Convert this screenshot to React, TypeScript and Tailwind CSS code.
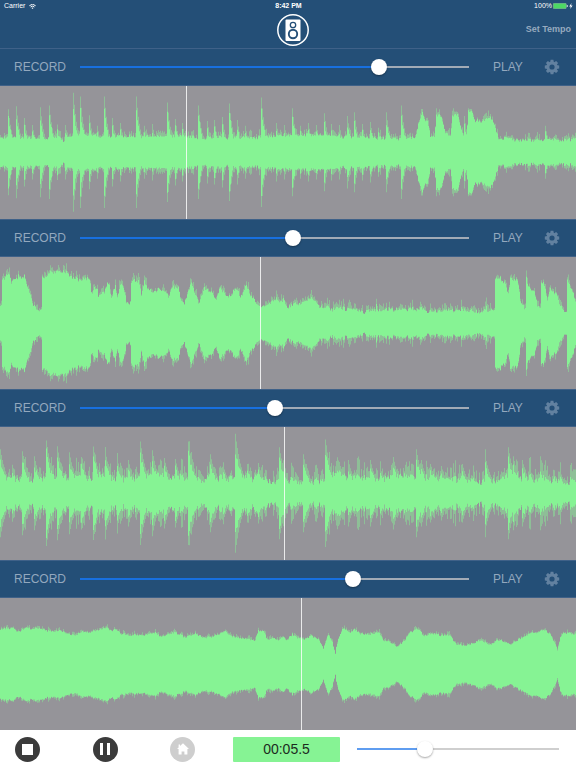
import { useState } from "react";

type Point = [x: number, amp: number];

interface Track {
  name: string;
  volume: number;
  playhead: number;
  body: Point[];
  hits: Point[];
  decay: number;
  grain: number;
  haze: number;
}

const WIDTH = 576;
const HEIGHT = 133;
const MID = HEIGHT / 2;

const TRACKS: Track[] = [
  {
    name: "Track 1",
    volume: 78,
    playhead: 186,
    body: [
      [0, 15], [60, 15], [63, 11], [66, 17], [100, 17], [186, 16], [192, 15], [250, 15], [288, 18], [330, 18],
      [345, 16], [400, 14], [415, 15], [418, 29], [422, 40], [427, 30], [430, 18], [434, 16], [436, 37], [441, 36],
      [445, 20], [450, 16], [452, 36], [457, 39], [461, 24], [464, 15], [466, 15], [468, 42], [471, 42], [474, 33],
      [480, 31], [485, 32], [490, 36], [494, 28], [498, 14], [515, 13], [540, 13], [576, 13],
    ],
    hits: [
      [8, 44], [16, 47], [24, 35], [32, 28], [40, 46], [49, 48], [57, 28], [65, 28], [73, 61], [80, 57], [89, 38],
      [97, 27], [104, 57], [112, 35], [120, 30], [136, 57], [144, 27], [152, 29], [160, 22], [167, 51], [175, 34],
      [182, 30], [198, 48], [207, 32], [214, 33], [222, 36], [229, 50], [237, 33], [245, 27], [261, 56], [276, 30],
      [284, 28], [292, 45], [300, 27], [308, 30], [316, 28], [324, 40], [331, 29], [339, 28], [347, 37], [354, 41],
      [362, 29], [370, 31], [378, 25], [386, 41], [401, 48], [422, 44], [436, 45], [453, 45], [464, 37], [469, 44],
      [545, 27],
    ],
    decay: 2.8,
    grain: 5,
    haze: 8,
  },
  {
    name: "Track 2",
    volume: 55,
    playhead: 260,
    body: [
      [0, 17], [1, 20], [2, 44], [5, 47], [9, 50], [11, 43], [18, 48], [22, 47], [24, 49], [26, 40], [30, 28],
      [33, 19], [37, 15], [41, 13], [42, 46], [47, 46], [50, 51], [58, 53], [66, 51], [72, 46], [80, 44], [85, 46],
      [90, 43], [91, 32], [93, 34], [97, 37], [98, 26], [101, 30], [104, 32], [107, 41], [109, 38], [111, 24],
      [115, 38], [117, 27], [119, 37], [121, 42], [124, 32], [126, 22], [130, 22], [131, 41], [136, 45], [139, 40],
      [141, 26], [144, 42], [147, 35], [155, 32], [160, 36], [165, 31], [168, 28], [171, 36], [178, 36], [180, 26],
      [184, 21], [188, 33], [191, 41], [195, 28], [198, 21], [202, 27], [204, 35], [212, 32], [216, 23], [219, 35],
      [226, 29], [231, 28], [233, 35], [236, 35], [240, 26], [243, 33], [246, 39], [249, 29], [253, 28], [257, 19],
      [261, 17], [272, 21], [276, 25], [280, 21], [283, 26], [287, 15], [289, 18], [295, 20], [302, 21], [308, 25],
      [314, 24], [318, 18], [330, 15], [350, 15], [360, 12], [390, 14], [415, 15], [430, 13], [460, 13], [480, 12],
      [492, 13], [494, 13], [495, 44], [499, 47], [504, 42], [508, 32], [510, 46], [513, 44], [517, 46], [520, 24],
      [524, 15], [525, 14], [526, 46], [528, 36], [534, 34], [537, 18], [540, 15], [541, 41], [544, 38], [547, 26],
      [550, 34], [556, 30], [559, 20], [565, 13], [566, 13], [567, 42], [572, 34], [576, 16],
    ],
    hits: [
      [9, 57], [119, 44], [136, 49], [144, 49], [172, 42], [190, 46], [246, 43], [376, 25], [389, 22], [412, 24],
      [461, 24], [486, 24], [511, 50], [526, 54], [541, 44], [550, 39], [567, 47],
    ],
    decay: 1.5,
    grain: 6,
    haze: 9,
  },
  {
    name: "Track 3",
    volume: 50,
    playhead: 284,
    body: [
      [0, 20], [14, 17], [30, 14], [60, 17], [90, 15], [105, 19], [120, 14], [150, 20], [165, 18], [200, 14],
      [240, 19], [260, 16], [277, 12], [300, 14], [320, 13], [335, 19], [350, 18], [380, 14], [395, 20], [420, 16],
      [440, 15], [470, 14], [490, 13], [512, 19], [530, 15], [576, 12],
    ],
    hits: [
      [0, 45], [12, 26], [22, 43], [34, 38], [46, 54], [57, 48], [69, 42], [81, 37], [93, 48], [105, 43], [117, 35],
      [128, 34], [140, 53], [152, 44], [164, 36], [175, 35], [188, 53], [198, 24], [210, 40], [223, 28], [235, 61],
      [247, 30], [258, 31], [279, 47], [303, 40], [325, 55], [339, 32], [348, 34], [370, 34], [380, 26], [393, 37],
      [416, 45], [421, 34], [430, 30], [441, 28], [462, 30], [485, 38], [508, 47], [513, 38], [522, 34], [530, 24],
      [540, 26], [560, 22],
    ],
    decay: 4.5,
    grain: 11,
    haze: 20,
  },
  {
    name: "Track 4",
    volume: 71,
    playhead: 301,
    body: [
      [0, 34], [3, 36], [13, 37], [18, 33], [26, 36], [40, 36], [50, 33], [58, 34], [70, 31], [75, 29], [82, 33],
      [88, 32], [95, 34], [106, 37], [111, 34], [115, 36], [120, 31], [130, 29], [145, 30], [155, 32], [160, 28],
      [175, 32], [185, 27], [195, 31], [205, 27], [215, 29], [225, 33], [230, 28], [245, 26], [255, 24], [258, 34],
      [263, 34], [267, 24], [273, 27], [279, 24], [283, 28], [287, 25], [292, 31], [297, 26], [305, 26], [310, 29],
      [318, 26], [323, 17], [328, 30], [332, 22], [335, 12], [338, 26], [342, 35], [344, 36], [350, 32], [354, 35],
      [360, 31], [370, 30], [378, 32], [383, 24], [390, 23], [396, 18], [404, 24], [410, 32], [418, 36], [424, 28],
      [431, 32], [440, 29], [450, 29], [456, 20], [465, 19], [480, 24], [490, 20], [498, 25], [510, 21], [520, 26],
      [530, 31], [545, 35], [550, 30], [555, 20], [557, 13], [560, 28], [564, 32], [571, 31], [576, 30],
    ],
    hits: [[225, 35], [418, 38], [449, 34], [504, 24]],
    decay: 1.5,
    grain: 3,
    haze: 4,
  },
];

// seeded so that a track keeps its shape between renders
function noise(n: number) {
  const s = Math.sin(n * 127.1 + 11.7) * 43758.5453;
  return s - Math.floor(s);
}

function bodyAt(points: Point[], x: number) {
  const next = points.findIndex(([px]) => px >= x);
  if (next <= 0) return points[0][1];
  const [x0, a0] = points[next - 1];
  const [x1, a1] = points[next];
  return a0 + ((a1 - a0) * (x - x0)) / (x1 - x0);
}

function hitAt(hits: Point[], x: number, decay: number) {
  return hits.reduce((max, [hx, amp]) => (x < hx ? max : Math.max(max, amp * Math.exp((hx - x) / decay / 1.6))), 0);
}

function wavePaths(track: Track, seed: number) {
  let core = "";
  let edge = "";
  for (let x = 0; x < WIDTH; x++) {
    const fine = noise(x + seed * 1000);
    const coarse = noise(Math.floor(x / 3) + seed * 700 + 31);
    const n = fine * 0.6 + coarse * 0.4;
    const body = bodyAt(track.body, x) + (n - 0.6) * track.grain;
    const hit = hitAt(track.hits, x, track.decay);
    const solid = Math.max(body, hit * (0.62 + n * 0.24));
    const outer = Math.max(hit * 0.98, solid + (noise(x * 3 + seed) * 0.6 + coarse * 0.4) ** 2 * track.haze);
    core += `M${x} ${(MID - solid).toFixed(1)}h1V${(MID + solid).toFixed(1)}h-1z`;
    edge += `M${x} ${(MID - outer).toFixed(1)}h1V${(MID + outer).toFixed(1)}h-1z`;
  }
  return { core, edge };
}

const WAVES = TRACKS.map(wavePaths);

const RANGE =
  "block h-4 min-w-0 appearance-none bg-[length:100%_2px] bg-center bg-no-repeat [&::-webkit-slider-thumb]:size-4 [&::-webkit-slider-thumb]:appearance-none [&::-webkit-slider-thumb]:rounded-full [&::-webkit-slider-thumb]:bg-white [&::-webkit-slider-thumb]:shadow-[0_1px_2px_rgba(0,0,0,0.35)]";

interface SliderProps {
  label: string;
  initial: number;
  fill: string;
  rest: string;
  className: string;
}

function Slider({ label, initial, fill, rest, className }: SliderProps) {
  const [value, setValue] = useState(initial);
  return (
    <input
      type="range"
      aria-label={label}
      value={value}
      onChange={(e) => setValue(Number(e.target.value))}
      className={`${RANGE} ${className}`}
      style={{ backgroundImage: `linear-gradient(to right, ${fill} ${value}%, ${rest} ${value}%)` }}
    />
  );
}

function GearIcon() {
  return (
    <svg viewBox="0 0 16 16" className="size-4" fill="currentColor" aria-hidden="true">
      {[0, 45, 90, 135].map((a) => (
        <path key={a} d="M6.6 .8h2.8l.5 3H6.1zM6.6 15.2h2.8l.5-3H6.1z" transform={`rotate(${a} 8 8)`} />
      ))}
      <circle cx="8" cy="8" r="4.1" fill="none" stroke="currentColor" strokeWidth="3" />
    </svg>
  );
}

function SpeakerLogo() {
  return (
    <svg viewBox="0 0 32 32" className="size-8" aria-hidden="true">
      <circle cx="16" cy="16" r="15.2" fill="none" stroke="#fff" strokeWidth="1.5" />
      <rect x="8.5" y="5.5" width="15" height="21.5" rx="1" fill="#fff" />
      <circle cx="16" cy="11" r="2.7" fill="none" stroke="#244f77" strokeWidth="1.3" />
      <circle cx="16" cy="20" r="4.2" fill="none" stroke="#244f77" strokeWidth="1.9" />
    </svg>
  );
}

function StatusBar() {
  return (
    <div className="grid h-3 grid-cols-3 items-center pr-[3px] pl-1 text-[7px] text-white">
      <span className="flex items-center gap-1">
        Carrier
        <svg viewBox="0 0 14 10" className="h-[5px] w-[7px]" fill="none" stroke="currentColor" strokeWidth="2" aria-hidden="true">
          <path d="M.8 3.4a9 9 0 0 1 12.4 0M3.2 6a5.6 5.6 0 0 1 7.6 0" />
          <path d="M5 7.8a3 3 0 0 1 4 0L7 10z" fill="currentColor" stroke="none" />
        </svg>
      </span>
      <span className="text-center font-bold">8:42 PM</span>
      <span className="flex items-center justify-end">
        100%
        <svg viewBox="0 0 20 6" className="ml-px h-[6px] w-5" aria-hidden="true">
          <rect x=".25" y=".25" width="13" height="5.5" rx="1" fill="#4cd964" stroke="#9bb0a8" strokeWidth=".5" />
          <path d="M13.8 2h.8v2h-.8z" fill="#fff" />
          <path d="M18.6 0l-2.4 3.4h1.6L17.2 6l2.4-3.4H18z" fill="#fff" />
        </svg>
      </span>
    </div>
  );
}

function TrackRow({ track, index }: { track: Track; index: number }) {
  const wave = WAVES[index];
  return (
    <section className="flex flex-1 flex-col" aria-label={track.name}>
      <div className="flex h-[38px] items-center border-y border-[#3f6188] pr-4 pl-[14px] text-[12px] text-[#93a8be]">
        <button type="button" className="w-[66px] text-left">RECORD</button>
        <Slider label={`${track.name} volume`} initial={track.volume} fill="#1870e0" rest="#a2abb6" className="flex-1" />
        <button type="button" className="w-[75px] pl-6 text-left">PLAY</button>
        <button type="button" aria-label={`${track.name} settings`} className="text-[#6281a0]">
          <GearIcon />
        </button>
      </div>
      <div className="relative min-h-[100px] flex-1 bg-[#959499]">
        <svg
          viewBox={`0 0 ${WIDTH} ${HEIGHT}`}
          preserveAspectRatio="none"
          className="absolute inset-0 size-full text-[#86f394]"
          fill="currentColor"
          aria-hidden="true"
        >
          <path d={wave.edge} opacity="0.45" />
          <path d={wave.core} />
        </svg>
        <div className="absolute inset-y-0 w-px bg-white/80" style={{ left: `${(track.playhead / WIDTH) * 100}%` }} />
      </div>
    </section>
  );
}

function Transport() {
  return (
    <footer className="flex h-[38px] items-center bg-white pr-[17px] pl-[15px]">
      <div className="flex flex-1 items-center justify-between pr-[38px]">
        <button type="button" aria-label="Stop" className="flex size-[25px] items-center justify-center rounded-full bg-[#3b3b3b]">
          <span className="size-[11px] bg-white" />
        </button>
        <button type="button" aria-label="Pause" className="flex size-[25px] items-center justify-center gap-1 rounded-full bg-[#3b3b3b]">
          <span className="h-3 w-[3px] bg-white" />
          <span className="h-3 w-[3px] bg-white" />
        </button>
        <button type="button" aria-label="Home" className="flex size-[25px] items-center justify-center rounded-full bg-[#cecece]">
          <svg viewBox="0 0 14 14" className="size-[14px]" fill="#fff" aria-hidden="true">
            <path d="M7 1.2l6 5.8h-1.6v5.4H8.4V9.6H5.6v2.8H2.6V7H1l1.6-1.6V2.4H4v1.7z" />
          </svg>
        </button>
      </div>
      <output className="flex h-[25px] w-[107px] items-center justify-center rounded-[1px] bg-[#86f394] text-[14px] text-[#1c2b1e]">
        00:05.5
      </output>
      <Slider label="Master volume" initial={32} fill="#5f9df0" rest="#cfcfcf" className="ml-[17px] w-[202px]" />
    </footer>
  );
}

export default function App() {
  return (
    <main className="flex min-h-screen flex-col bg-[#244f77] font-['Liberation_Sans',Arial,sans-serif]">
      <header>
        <StatusBar />
        <div className="grid h-9 grid-cols-3 items-center pr-[5px] pl-[15px]">
          <h1 className="col-start-2 flex justify-center pb-px" aria-label="Looper">
            <SpeakerLogo />
          </h1>
          <button type="button" className="justify-self-end text-[9px] font-bold text-[#97aabf]">
            Set Tempo
          </button>
        </div>
      </header>
      {TRACKS.map((track, i) => (
        <TrackRow key={track.name} track={track} index={i} />
      ))}
      <Transport />
    </main>
  );
}
